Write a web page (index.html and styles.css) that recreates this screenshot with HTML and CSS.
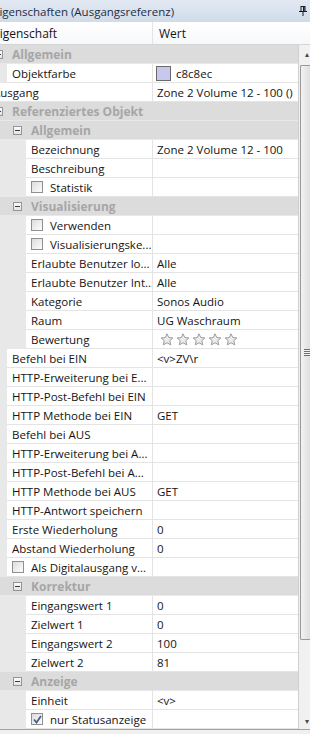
FILE: index.html
```html
<!DOCTYPE html>
<html lang="de">
<head>
  <meta charset="UTF-8" />
  <title>Eigenschaften (Ausgangsreferenz)</title>
  <link rel="stylesheet" href="styles.css">
</head>
<body>
  <div class="title">
    <span class="title-text">Eigenschaften (Ausgangsreferenz)</span>
    <svg class="pin" width="8" height="10" viewBox="0 0 8 10">
      <rect x="2" y="0.5" width="4" height="5" fill="none" stroke="#1b1b1b"/>
      <rect x="4" y="1" width="1.5" height="4" fill="#1b1b1b"/>
      <rect x="0" y="5" width="8" height="1" fill="#1b1b1b"/>
      <rect x="3.5" y="6" width="1" height="4" fill="#1b1b1b"/>
    </svg>
  </div>
  <div class="head">
    <div class="h-name">Eigenschaft</div>
    <div class="h-val">Wert</div>
  </div>
  <div class="grid">
    <div class="rows" id="rows"></div>
    <div class="scroll">
      <div class="arrow">&#9652;</div>
      <div class="thumb"><div class="grip"></div></div>
      <div class="track"></div>
      <div class="arrow">&#9662;</div>
    </div>
  </div>
  <div class="footer"></div>
  <script>
    const rows = [
      ['cat', 0, 'Allgemein'],
      ['prop', 1, 'Objektfarbe', 'swatch'],
      ['prop', 0, 'Ausgang', 'Zone 2 Volume 12 - 100 ()'],
      ['cat', 0, 'Referenziertes Objekt'],
      ['cat', 1, 'Allgemein'],
      ['prop', 2, 'Bezeichnung', 'Zone 2 Volume 12 - 100'],
      ['prop', 2, 'Beschreibung', ''],
      ['check', 2, 'Statistik'],
      ['cat', 1, 'Visualisierung'],
      ['check', 2, 'Verwenden'],
      ['check', 2, 'Visualisierungske...'],
      ['prop', 2, 'Erlaubte Benutzer lo...', 'Alle'],
      ['prop', 2, 'Erlaubte Benutzer Int...', 'Alle'],
      ['prop', 2, 'Kategorie', 'Sonos Audio'],
      ['prop', 2, 'Raum', 'UG Waschraum'],
      ['prop', 2, 'Bewertung', 'stars'],
      ['prop', 1, 'Befehl bei EIN', '<v>ZV\\r'],
      ['prop', 1, 'HTTP-Erweiterung bei E...', ''],
      ['prop', 1, 'HTTP-Post-Befehl bei EIN', ''],
      ['prop', 1, 'HTTP Methode bei EIN', 'GET'],
      ['prop', 1, 'Befehl bei AUS', ''],
      ['prop', 1, 'HTTP-Erweiterung bei A...', ''],
      ['prop', 1, 'HTTP-Post-Befehl bei A...', ''],
      ['prop', 1, 'HTTP Methode bei AUS', 'GET'],
      ['prop', 1, 'HTTP-Antwort speichern', ''],
      ['prop', 1, 'Erste Wiederholung', '0'],
      ['prop', 1, 'Abstand Wiederholung', '0'],
      ['check', 1, 'Als Digitalausgang v...'],
      ['cat', 1, 'Korrektur'],
      ['prop', 2, 'Eingangswert 1', '0'],
      ['prop', 2, 'Zielwert 1', '0'],
      ['prop', 2, 'Eingangswert 2', '100'],
      ['prop', 2, 'Zielwert 2', '81'],
      ['cat', 1, 'Anzeige'],
      ['prop', 2, 'Einheit', '<v>'],
      ['checked', 2, 'nur Statusanzeige']
    ];

    const star = '<svg width="14" height="13" viewBox="0 0 14 13"><path d="M7 0.8 L8.8 4.6 L12.9 5 L9.8 7.7 L10.7 11.9 L7 9.7 L3.3 11.9 L4.2 7.7 L1.1 5 L5.2 4.6 Z" fill="#ececec" stroke="#9a9a9a" stroke-width="1"/></svg>';
    const tick = '<svg width="9" height="9" viewBox="0 0 9 9"><path d="M1 4.5 L3.5 7.5 L8 1" fill="none" stroke="#4a5f8a" stroke-width="1.8"/></svg>';
    const list = document.getElementById('rows');

    function esc(s) {
      return s.replace(/&/g, '&amp;').replace(/</g, '&lt;').replace(/>/g, '&gt;');
    }

    rows.forEach(([type, level, label, value]) => {
      const row = document.createElement('div');
      if (type === 'cat') {
        row.className = 'cat l' + level;
        row.innerHTML = `<span class="exp"></span><span>${label}</span>`;
      } else {
        row.className = 'row l' + level;
        let name = esc(label);
        if (type === 'check') name = '<span class="box"></span>' + name;
        if (type === 'checked') name = '<span class="box">' + tick + '</span>' + name;
        let val = esc(value || '');
        if (value === 'swatch') val = '<span class="swatch"></span>c8c8ec';
        if (value === 'stars') val = '<span class="stars">' + star.repeat(5) + '</span>';
        row.innerHTML = `<div class="name">${name}</div><div class="val">${val}</div>`;
      }
      list.appendChild(row);
    });
  </script>
</body>
</html>
```

FILE: styles.css
```css
* { box-sizing: border-box; }
body {
  margin: 0;
  width: 310px;
  height: 734px;
  overflow: hidden;
  font-family: 'Open Sans', sans-serif;
  font-size: 11.5px;
  color: #141414;
  background: #f0f0f0;
}
.title {
  height: 22px;
  display: flex;
  align-items: center;
  justify-content: space-between;
  padding-right: 3px;
  background: linear-gradient(#e2e9f3, #d0dbe9);
  color: #1e2d45;
  white-space: nowrap;
  overflow: hidden;
}
.title-text { margin-left: -7px; font-size: 11.5px; }
.pin { flex: none; }
.head {
  height: 23px;
  display: flex;
  background: linear-gradient(#ffffff, #f7f8fa);
  border-bottom: 1px solid #d5d5d5;
  font-size: 12px;
}
.h-name {
  width: 160px;
  margin-left: -7px;
  padding-top: 3px;
  border-right: 1px solid #e4e4e4;
  flex: none;
}
.h-val { padding: 3px 0 0 6px; }
.grid {
  display: flex;
  height: 684px;
}
.rows {
  margin-left: -12px;
  width: 311px;
  flex: none;
  background: #e8e8e8;
  border-right: 1px solid #d0d0d0;
}
.row, .cat {
  display: flex;
  height: 19px;
  white-space: nowrap;
}
.row.l0 { padding-left: 0; }
.row.l1 { padding-left: 19px; }
.row.l2 { padding-left: 38px; }
.name, .val {
  display: flex;
  align-items: center;
  background: #fff;
  border-bottom: 1px solid #e4e4e4;
  overflow: hidden;
}
.name {
  flex: 1;
  min-width: 0;
  padding-left: 5px;
}
.val {
  width: 146px;
  flex: none;
  padding-left: 4px;
  border-left: 1px solid #e4e4e4;
}
.cat {
  align-items: center;
  background: #dcdcdc;
  color: #a6a6a6;
  font-weight: bold;
  font-size: 12px;
  border-bottom: 1px solid #e8e8e8;
}
.cat.l0 { padding-left: 6px; }
.cat.l1 { padding-left: 25px; }
.exp {
  width: 9px;
  height: 9px;
  margin-right: 9px;
  border: 1px solid #959595;
  background: linear-gradient(#fafafa, #e4e4e4);
  position: relative;
  flex: none;
}
.exp::after {
  content: '';
  position: absolute;
  left: 1px;
  top: 3px;
  width: 5px;
  height: 1px;
  background: #3c3c3c;
}
.box {
  width: 12px;
  height: 12px;
  margin-right: 7px;
  border: 1px solid #8f8f8f;
  background: linear-gradient(135deg, #dcdcdc, #fdfdfd);
  display: flex;
  align-items: center;
  justify-content: center;
  flex: none;
}
.swatch {
  width: 15px;
  height: 15px;
  margin: 0 5px 0 -1px;
  border: 1px solid #6a6a6a;
  background: #c8c8ec;
  flex: none;
}
.stars {
  display: flex;
  gap: 2px;
  margin-left: 3px;
}
.scroll {
  width: 11px;
  flex: none;
  display: flex;
  flex-direction: column;
  background: #f1f1f1;
}
.arrow {
  height: 17px;
  font-size: 8px;
  line-height: 17px;
  text-align: right;
  color: #4a4a4a;
  padding-right: 1px;
}
.thumb {
  height: 575px;
  margin: 3px 0 0 1px;
  border: 1px solid #999;
  border-right: none;
  border-radius: 2px 0 0 2px;
  background: linear-gradient(to right, #f3f3f3, #dedede);
  display: flex;
  align-items: center;
  justify-content: flex-end;
}
.grip {
  width: 6px;
  height: 7px;
  background: repeating-linear-gradient(#6d6d6d 0 1px, #f4f4f4 1px 2px);
}
.track { flex: 1; }
.footer {
  height: 5px;
  border-top: 1px solid #a3a3a3;
  background: #f0f0f0;
}
```
